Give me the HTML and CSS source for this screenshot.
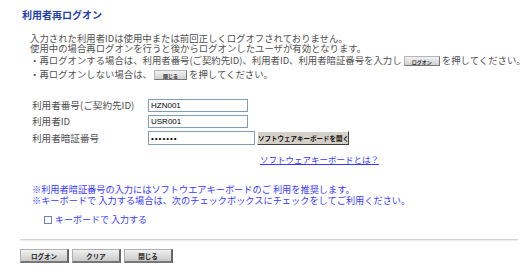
FILE: index.html
```html
<!DOCTYPE html>
<html lang="ja">
<head>
  <meta charset="UTF-8" />
  <title>利用者再ログオン</title>
  <link rel="stylesheet" href="styles.css">
</head>
<body>
  <div class="page">
    <h1 class="title">利用者再ログオン</h1>

    <div class="message">
      <p>入力された利用者IDは使用中または前回正しくログオフされておりません。</p>
      <p>使用中の場合再ログオンを行うと後からログオンしたユーザが有効となります。</p>
      <p class="with-btn">・再ログオンする場合は、利用者番号(ご契約先ID)、利用者ID、利用者暗証番号を入力し <span class="mini-btn">ログオン</span> を押してください。</p>
      <p class="with-btn">・再ログオンしない場合は、 <span class="mini-btn short">閉じる</span> を押してください。</p>
    </div>

    <form class="login-form" onsubmit="return false;">
      <label>利用者番号(ご契約先ID)</label>
      <div class="field"><input type="text" value="HZN001"></div>
      <label>利用者ID</label>
      <div class="field"><input type="text" value="USR001"></div>
      <label>利用者暗証番号</label>
      <div class="field">
        <input type="password" class="pw" value="1234567">
        <button type="button" class="kb-btn">ソフトウェアキーボードを開く</button>
      </div>
      <div class="field link-row"><a href="#">ソフトウェアキーボードとは？</a></div>
    </form>

    <div class="notes">
      <p>※利用者暗証番号の入力にはソフトウエアキーボードのご 利用を推奨します。</p>
      <p>※キーボードで 入力する場合は、次のチェックボックスにチェックをしてご利用ください。</p>
      <label class="check"><span class="box"></span>キーボードで 入力する</label>
    </div>

    <div class="rule"></div>

    <div class="actions">
      <button type="button" class="act-btn">ログオン</button>
      <button type="button" class="act-btn">クリア</button>
      <button type="button" class="act-btn">閉じる</button>
    </div>
  </div>
</body>
</html>
```

FILE: styles.css
```css
body {
  margin: 0;
  background: #fff;
  font-family: "Noto Sans CJK JP", "Noto Sans", sans-serif;
  font-size: 9px;
  color: #505050;
}
.page {
  padding: 8px 9px 0 20px;
}
.title {
  margin: 0 0 11px 2px;
  font-size: 10px;
  line-height: 14px;
  font-weight: bold;
  color: #1f3fa8;
}
.message {
  margin-left: 10px;
  white-space: nowrap;
  font-size: 9.4px;
}
.message p {
  margin: 0;
  line-height: 10px;
}
.message .with-btn {
  line-height: 13px;
  margin-top: 1px;
}
.mini-btn {
  display: inline-block;
  width: 36px;
  height: 10px;
  line-height: 10px;
  vertical-align: middle;
  text-align: center;
  font-size: 5px;
  font-weight: bold;
  color: #333;
  background: linear-gradient(#f2f2f2, #cfcfcf);
  border: 1px solid #b5b5b5;
  border-right-color: #777;
  border-bottom-color: #777;
  box-sizing: border-box;
}
.mini-btn.short {
  width: 33px;
}
.login-form {
  display: grid;
  grid-template-columns: 116px auto;
  row-gap: 3px;
  margin: 18px 0 0 12px;
  align-items: center;
}
.login-form label {
  line-height: 13px;
  font-size: 9.6px;
}
.field {
  display: flex;
  align-items: center;
  gap: 2px;
}
.field input {
  width: 100px;
  height: 13px;
  box-sizing: border-box;
  margin: 0;
  padding: 0 2px;
  border: 1px solid #7f9db9;
  font-family: "Liberation Sans", sans-serif;
  font-size: 8px;
  color: #000;
  outline: none;
}
.field input.pw {
  width: 107px;
  height: 14px;
  font-size: 8px;
  letter-spacing: 1px;
}
.kb-btn {
  width: 92px;
  height: 14px;
  margin: 0;
  padding: 0;
  font-family: "Noto Sans CJK JP", sans-serif;
  font-size: 6.5px;
  font-weight: bold;
  color: #111;
  background: #d4d0c8;
  border: 1px solid;
  border-color: #fff #404040 #404040 #fff;
  white-space: nowrap;
}
.link-row {
  grid-column: 2;
  margin-top: 6px;
  padding-left: 112px;
}
.link-row a {
  color: #3a3aff;
  text-decoration: underline;
  font-size: 8.5px;
  line-height: 11px;
}
.notes {
  margin: 19px 0 0 12px;
  color: #3a3aff;
  font-size: 9.2px;
}
.notes p {
  margin: 0;
  line-height: 11px;
}
.check {
  display: flex;
  align-items: center;
  gap: 3px;
  margin: 8px 0 0 12px;
  line-height: 12px;
  font-size: 9px;
}
.check .box {
  width: 8px;
  height: 8px;
  box-sizing: border-box;
  border: 1px solid #6d84b0;
  background: #fff;
}
.rule {
  margin: 13px 0 0 0;
  height: 1px;
  border-top: 1px solid #d2d2d2;
  background: #ecebe6;
}
.actions {
  display: flex;
  gap: 3px;
  margin-top: 8px;
}
.act-btn {
  width: 49px;
  height: 14px;
  margin: 0;
  padding: 0;
  font-family: "Noto Sans CJK JP", sans-serif;
  font-size: 6.5px;
  font-weight: bold;
  color: #222;
  background: linear-gradient(#f0f0f0, #c9c9c9);
  border: 1px solid #b0b0b0;
  border-right: 2px solid #666;
  border-bottom: 2px solid #777;
}
```
